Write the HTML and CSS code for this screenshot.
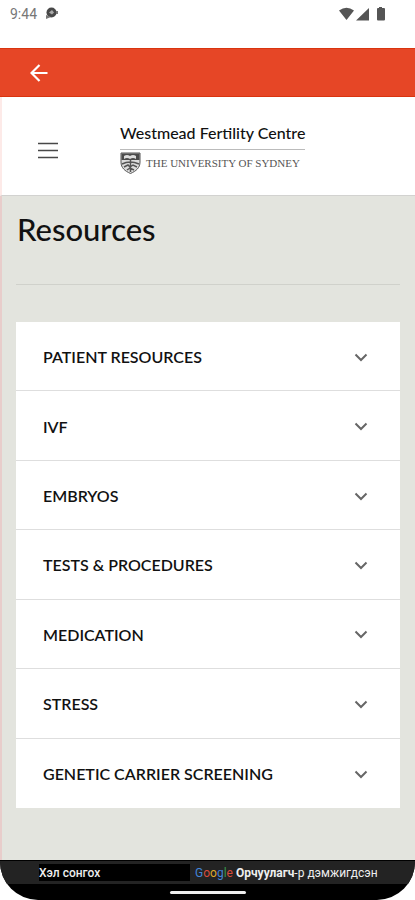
FILE: index.html
```html
<!DOCTYPE html>
<html lang="en">
<head>
<meta charset="utf-8">
<meta name="viewport" content="width=device-width, initial-scale=1">
<title>Resources</title>
<link rel="stylesheet" href="styles.css">
</head>
<body>
<div class="screen">
  <div class="status">
    <span class="clock">9:44</span>
    <svg class="notice" width="14" height="12" viewBox="0 0 14 12" aria-hidden="true"><circle cx="6.5" cy="5.5" r="5" fill="#484848"/><path d="M1 8v4l5-2zM11 4h2v3h-2z" fill="#777"/><path d="M4 5.500 7 3l2 2.500-2 2z" fill="#aaa"/></svg>
    <svg class="signals" width="47" height="14" viewBox="0 0 47 14" aria-hidden="true"><path d="M0 3.500Q7.500-2 15 3.500L7.500 13zM17 13.500 30 1v12.500zM40 1V0h3v1h2q1 0 1 1v10.500q0 1-1 1h-6q-1 0-1-1V2q0-1 1-1z" fill="#555"/></svg>
  </div>
  <nav class="appbar">
    <a class="back" href="#" aria-label="Back"><svg width="18" height="18" viewBox="0 0 18 18" fill="none" stroke="#fff" stroke-width="2.200"><path d="M17.500 9H2M9.500 1 1.500 9l8 8"/></svg></a>
  </nav>
  <header class="header">
    <button class="menu" type="button" aria-label="Menu"><svg width="20" height="17" viewBox="0 0 20 17" stroke="#484848" stroke-width="1.500"><path d="M0 1.500h20M0 8.500h20M0 15.500h20"/></svg></button>
    <div class="brand">
      <div class="brand-name">Westmead Fertility Centre</div>
      <div class="university">
        <svg width="21" height="22" viewBox="0 0 21 22" aria-hidden="true"><path d="M1 1h19v9c0 6-4 9-9.500 11.500C5 19 1 16 1 10z" fill="#ddd" stroke="#555"/><path d="M1.500 1.500h18V8h-18z" fill="#4b4b4b"/><path d="M4 4q3-2 6 0 3-2 6 0v3q-3-2-6 0-3-2-6 0z" fill="#ddd"/><path d="M10.500 8v12M2 12q8-4 17 0M4 15l4-2 2 2 3-2 4 2M7 18l3-2 4 2" fill="none" stroke="#555" stroke-width="1.500"/></svg>
        <span>THE UNIVERSITY OF SYDNEY</span>
      </div>
    </div>
  </header>
  <main class="content">
    <h1>Resources</h1>
    <div class="topics">
      <button type="button" class="topic">PATIENT RESOURCES<svg class="chevron" viewBox="0 0 14 9"><path d="m1.500 1.500 5.500 5.500 5.500-5.500"/></svg></button>
      <button type="button" class="topic">IVF<svg class="chevron" viewBox="0 0 14 9"><path d="m1.500 1.500 5.500 5.500 5.500-5.500"/></svg></button>
      <button type="button" class="topic">EMBRYOS<svg class="chevron" viewBox="0 0 14 9"><path d="m1.500 1.500 5.500 5.500 5.500-5.500"/></svg></button>
      <button type="button" class="topic">TESTS &amp; PROCEDURES<svg class="chevron" viewBox="0 0 14 9"><path d="m1.500 1.500 5.500 5.500 5.500-5.500"/></svg></button>
      <button type="button" class="topic">MEDICATION<svg class="chevron" viewBox="0 0 14 9"><path d="m1.500 1.500 5.500 5.500 5.500-5.500"/></svg></button>
      <button type="button" class="topic">STRESS<svg class="chevron" viewBox="0 0 14 9"><path d="m1.500 1.500 5.500 5.500 5.500-5.500"/></svg></button>
      <button type="button" class="topic">GENETIC CARRIER SCREENING<svg class="chevron" viewBox="0 0 14 9"><path d="m1.500 1.500 5.500 5.500 5.500-5.500"/></svg></button>
    </div>
  </main>
  <footer class="bottom">
    <div class="translate">
      <button class="language" type="button">Хэл сонгох</button>
      <span class="google"><span class="blue">G</span><span class="red">o</span><span class="yellow">o</span><span class="blue">g</span><span class="green">l</span><span class="red">e</span></span>
      <span class="credit"><b>Орчуулагч</b>-р дэмжигдсэн</span>
    </div>
    <div class="home"></div>
  </footer>
</div>
</body>
</html>
```

FILE: styles.css
```css
* { box-sizing: border-box; }
body { margin: 0; background: #fff; color: #111; font-family: Lato, sans-serif; }
button { border: 0; padding: 0; background: none; color: inherit; font: inherit; text-align: left; }
svg { display: block; flex: none; }
.screen { min-height: 100vh; display: flex; flex-direction: column; }
.status { height: 48px; padding: 7px 29px 0 10px; display: flex; align-items: flex-start; gap: 8px; }
.clock { font: 14px/14px Roboto, sans-serif; color: #777; }
.signals { margin-left: auto; }
.appbar { height: 49px; padding-left: 30px; display: flex; align-items: center; background: #e64626; border-top: 1px solid #d9340f; border-bottom: 1px solid #d9340f; }
.header { height: 99px; padding: 6px 0 0 36px; display: flex; align-items: center; gap: 62px; border-left: 2px solid #fdeae8; border-bottom: 1px solid #d2d2d0; }
.menu { padding-top: 2px; }
.brand-name { padding-bottom: 7px; border-bottom: 1px solid #bbb; font-size: 16px; line-height: 18px; font-weight: 500; white-space: nowrap; }
.university { display: flex; align-items: center; gap: 5px; padding-top: 2px; font: 11px/22px "Liberation Serif", serif; color: #555; white-space: nowrap; }
.content { flex: 1; padding: 16px 15px 52px 14px; background: #e3e4de; border-left: 2px solid #e8cdcb; }
h1 { margin: 0 0 37px; padding: 0 1px 38px; border-bottom: 1px solid #d0d1cb; font-size: 31px; line-height: 34px; font-weight: 500; }
.topics { display: grid; grid-auto-rows: 1fr; min-height: 486px; background: #fff; }
.topic { display: flex; align-items: center; justify-content: space-between; padding: 2px 32px 0 27px; border-bottom: 1px solid #dedede; font-size: 16px; line-height: 20px; font-weight: 600; }
.topic:last-child { border-bottom: 0; }
.chevron { width: 14px; height: 9px; fill: none; stroke: #666; stroke-width: 2; }
.bottom { height: 40px; background: #000; border-radius: 0 0 38px 38px; border-top: 1px solid #000; overflow: hidden; }
.translate { height: 23px; padding: 0 36px 0 39px; display: flex; align-items: center; background: #232323; font: 12px/16px Roboto, sans-serif; color: #eee; white-space: nowrap; }
.language { width: 151px; height: 17px; margin-right: 5px; background: #000; color: #eee; font-weight: 500; }
.google { font-size: 12px; margin-right: 3px; }
.blue { color: #4285d8; }
.red { color: #d94b3c; }
.yellow { color: #dfa82c; }
.green { color: #36934d; }
.home { width: 76px; height: 3px; margin: 7px auto 0; border-radius: 2px; background: #eee; }
```
